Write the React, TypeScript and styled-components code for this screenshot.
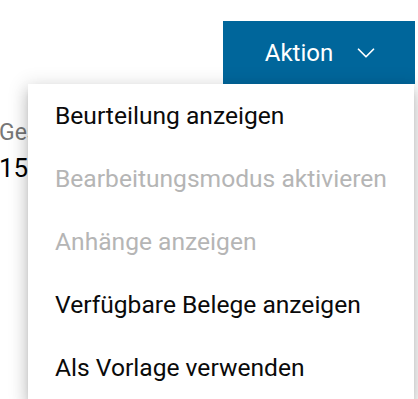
import React from 'react';
import styled, { createGlobalStyle } from 'styled-components';
import { ChevronDown } from 'lucide-react';

const GlobalStyle = createGlobalStyle`
  body {
    margin: 0;
    background: #ffffff;
    font-family: Roboto, "Liberation Sans", sans-serif;
    overflow: hidden;
  }
`;

const Page = styled.div`
  position: relative;
  width: 418px;
  height: 399px;
  overflow: hidden;
`;

const Toolbar = styled.div`
  display: flex;
  justify-content: flex-end;
  padding: 21px 3px 0 0;
`;

const ActionButton = styled.button`
  width: 192px;
  height: 63px;
  display: flex;
  align-items: center;
  justify-content: center;
  gap: 18px;
  background: #00669b;
  color: #ffffff;
  border: none;
  font-family: Roboto, "Liberation Sans", sans-serif;
  font-size: 24px;
  padding: 0 0 0 8px;
`;

const Details = styled.div`
  padding: 35px 0 0 0;
  margin-left: -1px;
`;

const FieldLabel = styled.div`
  font-size: 23px;
  color: #777777;
  line-height: 28px;
`;

const FieldValue = styled.div`
  font-size: 26px;
  color: #000000;
  line-height: 36px;
  margin-top: 3px;
`;

const Menu = styled.ul`
  position: absolute;
  top: 84px;
  left: 28px;
  width: 386px;
  margin: 0;
  padding: 0;
  list-style: none;
  background: #ffffff;
  box-shadow: 0 5px 6px -3px rgba(0, 0, 0, 0.2), 0 9px 14px 1px rgba(0, 0, 0, 0.14),
    0 3px 18px 3px rgba(0, 0, 0, 0.12);
`;

const MenuItem = styled.li<{ $disabled?: boolean }>`
  height: 63px;
  display: flex;
  align-items: center;
  padding-left: 27px;
  font-size: 24.6px;
  color: ${p => (p.$disabled ? '#b5b5b5' : '#0a0a0a')};
`;

const items = [
  { label: 'Beurteilung anzeigen', disabled: false },
  { label: 'Bearbeitungsmodus aktivieren', disabled: true },
  { label: 'Anhänge anzeigen', disabled: true },
  { label: 'Verfügbare Belege anzeigen', disabled: false },
  { label: 'Als Vorlage verwenden', disabled: false },
];

export default function App() {
  return (
    <Page>
      <GlobalStyle />
      <Toolbar>
        <ActionButton>
          Aktion
          <ChevronDown size={30} strokeWidth={1.4} />
        </ActionButton>
      </Toolbar>
      <Details>
        <FieldLabel>Gesamt</FieldLabel>
        <FieldValue>15</FieldValue>
      </Details>
      <Menu>
        {items.map(item => (
          <MenuItem key={item.label} $disabled={item.disabled}>
            {item.label}
          </MenuItem>
        ))}
      </Menu>
    </Page>
  );
}
